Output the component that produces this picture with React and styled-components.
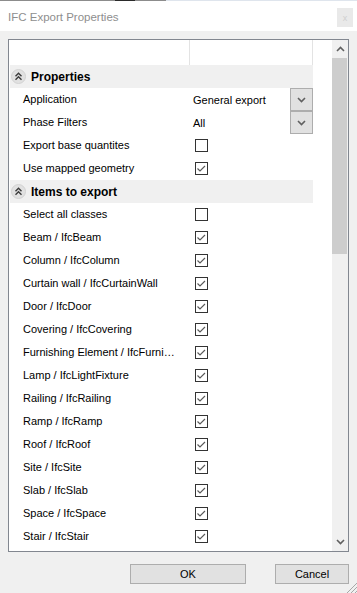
import React from 'react'
import styled, { createGlobalStyle } from 'styled-components'

const GlobalStyle = createGlobalStyle`
  html, body {
    margin: 0;
    padding: 0;
    background: #f0f0f0;
    font-family: "Liberation Sans", Arial, sans-serif;
  }
  * { box-sizing: border-box; }
`

const properties = [
  { label: 'Application', kind: 'select', value: 'General export' },
  { label: 'Phase Filters', kind: 'select', value: 'All' },
  { label: 'Export base quantites', kind: 'check', value: false },
  { label: 'Use mapped geometry', kind: 'check', value: true },
]

const items = [
  ['Select all classes', false],
  ['Beam / IfcBeam', true],
  ['Column / IfcColumn', true],
  ['Curtain wall / IfcCurtainWall', true],
  ['Door / IfcDoor', true],
  ['Covering / IfcCovering', true],
  ['Furnishing Element / IfcFurnishingElement', true],
  ['Lamp / IfcLightFixture', true],
  ['Railing / IfcRailing', true],
  ['Ramp / IfcRamp', true],
  ['Roof / IfcRoof', true],
  ['Site / IfcSite', true],
  ['Slab / IfcSlab', true],
  ['Space / IfcSpace', true],
  ['Stair / IfcStair', true],
]

function CollapseIcon() {
  return (
    <svg width="15" height="15" viewBox="0 0 15 15">
      <circle cx="7.5" cy="7.5" r="7" fill="#e1e1e1" stroke="#d2d2d2" />
      <path d="M4.5 7.2 L7.5 4.2 L10.5 7.2" fill="none" stroke="#3a3a3a" strokeWidth="1.4" />
      <path d="M4.5 10.7 L7.5 7.7 L10.5 10.7" fill="none" stroke="#3a3a3a" strokeWidth="1.4" />
    </svg>
  )
}

function Check({ on }) {
  return (
    <CheckBox>
      {on && (
        <svg width="11" height="11" viewBox="0 0 11 11">
          <path d="M1.5 5.5 L4 8 L9 3" fill="none" stroke="#5a5a5a" strokeWidth="1.2" />
        </svg>
      )}
    </CheckBox>
  )
}

function Chevron({ up }) {
  return (
    <svg width="9" height="6" viewBox="0 0 9 6">
      <path d={up ? 'M1 5 L4.5 1.5 L8 5' : 'M1 1 L4.5 4.5 L8 1'} fill="none" stroke="#606060" strokeWidth="1.6" />
    </svg>
  )
}

function App() {
  return (
    <Window>
      <GlobalStyle />
      <TitleBar>
        <Title>IFC Export Properties</Title>
        <CloseButton>x</CloseButton>
      </TitleBar>

      <Body>
        <Panel>
          <List>
            <Table>
              <HeaderCell />
              <HeaderCell />

              <SectionRow>
                <CollapseIcon />
                <SectionTitle>Properties</SectionTitle>
              </SectionRow>
              {properties.map((p) => (
                <React.Fragment key={p.label}>
                  <Label>{p.label}</Label>
                  <Value>
                    {p.kind === 'select' ? (
                      <>
                        <SelectText>{p.value}</SelectText>
                        <DropButton><Chevron /></DropButton>
                      </>
                    ) : (
                      <Check on={p.value} />
                    )}
                  </Value>
                </React.Fragment>
              ))}

              <SectionRow>
                <CollapseIcon />
                <SectionTitle>Items to export</SectionTitle>
              </SectionRow>
              {items.map(([label, on]) => (
                <React.Fragment key={label}>
                  <Label>{label}</Label>
                  <Value><Check on={on} /></Value>
                </React.Fragment>
              ))}
            </Table>
          </List>

          <Scrollbar>
            <ScrollArrow><Chevron up /></ScrollArrow>
            <Thumb />
            <Track />
            <ScrollArrow><Chevron /></ScrollArrow>
          </Scrollbar>
        </Panel>
      </Body>

      <Footer>
        <Button $width={116}>OK</Button>
        <Button $width={74}>Cancel</Button>
      </Footer>

      <Grip width="12" height="12" viewBox="0 0 12 12">
        <path d="M12 2 L2 12 M12 6 L6 12 M12 10 L10 12" stroke="#a8a8a8" strokeWidth="1" />
      </Grip>
    </Window>
  )
}

export default App

const Window = styled.div`
  position: relative;
  width: 357px;
  height: 593px;
  display: flex;
  flex-direction: column;
  background: #f0f0f0;
  overflow: hidden;
`

const TitleBar = styled.div`
  height: 31px;
  flex: none;
  display: flex;
  align-items: center;
  justify-content: space-between;
  padding: 0 4px 0 8px;
  background: #fff;
  border-top: 1px solid transparent;
  border-image: linear-gradient(to right, #8c8c8c 0, #8c8c8c 115px, #2a2a2a 115px, #2a2a2a 135px, #8c8c8c 135px, #8c8c8c 166px, #dfe5ed 166px) 1;
`

const Title = styled.div`
  font-size: 11.5px;
  color: #8e8e8e;
  padding-top: 1px;
`

const CloseButton = styled.div`
  width: 16px;
  height: 19px;
  margin-top: 3px;
  background: #e9e9e9;
  color: #cfcfcf;
  font-size: 9px;
  display: flex;
  align-items: center;
  justify-content: center;
`

const Body = styled.div`
  padding: 8px 8px 0 8px;
`

const Panel = styled.div`
  height: 513px;
  border: 1px solid #828790;
  background: #fff;
  display: flex;
`

const List = styled.div`
  flex: 1;
  overflow: hidden;
  padding-left: 1px;
`

const Table = styled.div`
  width: 303px;
  display: grid;
  grid-template-columns: 180px 123px;
  grid-template-rows: 25px;
  grid-auto-rows: 23px;
`

const HeaderCell = styled.div`
  border-right: 1px solid #e3e3e3;
`

const SectionRow = styled.div`
  grid-column: 1 / span 2;
  background: #f0f0f0;
  display: flex;
  align-items: center;
  padding-left: 1px;
  gap: 5px;

  svg { flex: none; }
`

const SectionTitle = styled.span`
  font-size: 12px;
  font-weight: bold;
  color: #000;
`

const Label = styled.div`
  padding: 0 14px 0 13px;
  font-size: 11px;
  color: #000;
  line-height: 23px;
  white-space: nowrap;
  overflow: hidden;
  text-overflow: ellipsis;
`

const Value = styled.div`
  display: flex;
  align-items: center;
  justify-content: space-between;
  padding-left: 3px;
`

const SelectText = styled.span`
  font-size: 11px;
  color: #000;
`

const DropButton = styled.div`
  width: 23px;
  height: 23px;
  background: #e1e1e1;
  border: 1px solid #adadad;
  display: flex;
  align-items: center;
  justify-content: center;
`

const CheckBox = styled.div`
  width: 13px;
  height: 13px;
  margin-left: 2px;
  border: 1px solid #333;
  background: #fff;
  display: flex;
  align-items: center;
  justify-content: center;
`

const Scrollbar = styled.div`
  width: 16px;
  flex: none;
  background: #f0f0f0;
  display: flex;
  flex-direction: column;
`

const ScrollArrow = styled.div`
  height: 18px;
  flex: none;
  display: flex;
  align-items: center;
  justify-content: center;
`

const Thumb = styled.div`
  height: 196px;
  flex: none;
  margin-right: 1px;
  background: #cdcdcd;
`

const Track = styled.div`
  flex: 1;
`

const Footer = styled.div`
  display: flex;
  justify-content: flex-end;
  gap: 29px;
  padding: 12px 8px 0 0;
`

const Button = styled.div`
  width: ${(p) => p.$width}px;
  height: 20px;
  background: #e1e1e1;
  border: 1px solid #adadad;
  display: flex;
  align-items: center;
  justify-content: center;
  font-size: 11px;
  color: #000;
`

const Grip = styled.svg`
  position: absolute;
  right: 0;
  bottom: 0;
`
